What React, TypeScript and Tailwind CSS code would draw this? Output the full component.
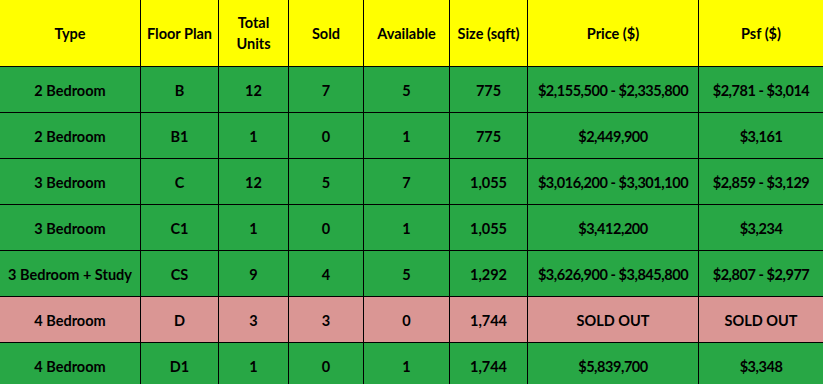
type Row = {
  type: string
  plan: string
  total: number
  sold: number
  available: number
  size: string
  price: string
  psf: string
}

const rows: Row[] = [
  { type: '2 Bedroom', plan: 'B', total: 12, sold: 7, available: 5, size: '775', price: '$2,155,500 - $2,335,800', psf: '$2,781 - $3,014' },
  { type: '2 Bedroom', plan: 'B1', total: 1, sold: 0, available: 1, size: '775', price: '$2,449,900', psf: '$3,161' },
  { type: '3 Bedroom', plan: 'C', total: 12, sold: 5, available: 7, size: '1,055', price: '$3,016,200 - $3,301,100', psf: '$2,859 - $3,129' },
  { type: '3 Bedroom', plan: 'C1', total: 1, sold: 0, available: 1, size: '1,055', price: '$3,412,200', psf: '$3,234' },
  { type: '3 Bedroom + Study', plan: 'CS', total: 9, sold: 4, available: 5, size: '1,292', price: '$3,626,900 - $3,845,800', psf: '$2,807 - $2,977' },
  { type: '4 Bedroom', plan: 'D', total: 3, sold: 3, available: 0, size: '1,744', price: 'SOLD OUT', psf: 'SOLD OUT' },
  { type: '4 Bedroom', plan: 'D1', total: 1, sold: 0, available: 1, size: '1,744', price: '$5,839,700', psf: '$3,348' },
]

const headers = ['Type', 'Floor Plan', 'Total Units', 'Sold', 'Available', 'Size (sqft)', 'Price ($)', 'Psf ($)']

export default function App() {
  return (
    <div className="h-[384px] w-[823px] overflow-hidden bg-black font-['Lato','Liberation_Sans',sans-serif] text-[14.5px] font-bold text-black">
      <div className="grid grid-cols-[140px_77px_69px_74px_85px_77px_170px_124px] grid-rows-[66px_repeat(7,45px)] gap-px">
        {headers.map((h) => (
          <div key={h} className="flex items-center justify-center bg-[#ffff00] px-1 text-center leading-[21px]">
            {h === 'Total Units' ? (
              <span>
                Total
                <br />
                Units
              </span>
            ) : (
              h
            )}
          </div>
        ))}
        {rows.map((r, i) => {
          const bg = r.price === 'SOLD OUT' ? 'bg-[#da9694]' : 'bg-[#28a745]'
          const cells = [r.type, r.plan, String(r.total), String(r.sold), String(r.available), r.size, r.price, r.psf]
          return cells.map((c, j) => (
            <div
              key={`${i}-${j}`}
              className={`flex items-center justify-center whitespace-nowrap pt-0.5 text-center ${bg} ${j >= 6 && c !== 'SOLD OUT' ? 'tracking-[-0.45px]' : ''}`}
            >
              {c}
            </div>
          ))
        })}
      </div>
    </div>
  )
}
